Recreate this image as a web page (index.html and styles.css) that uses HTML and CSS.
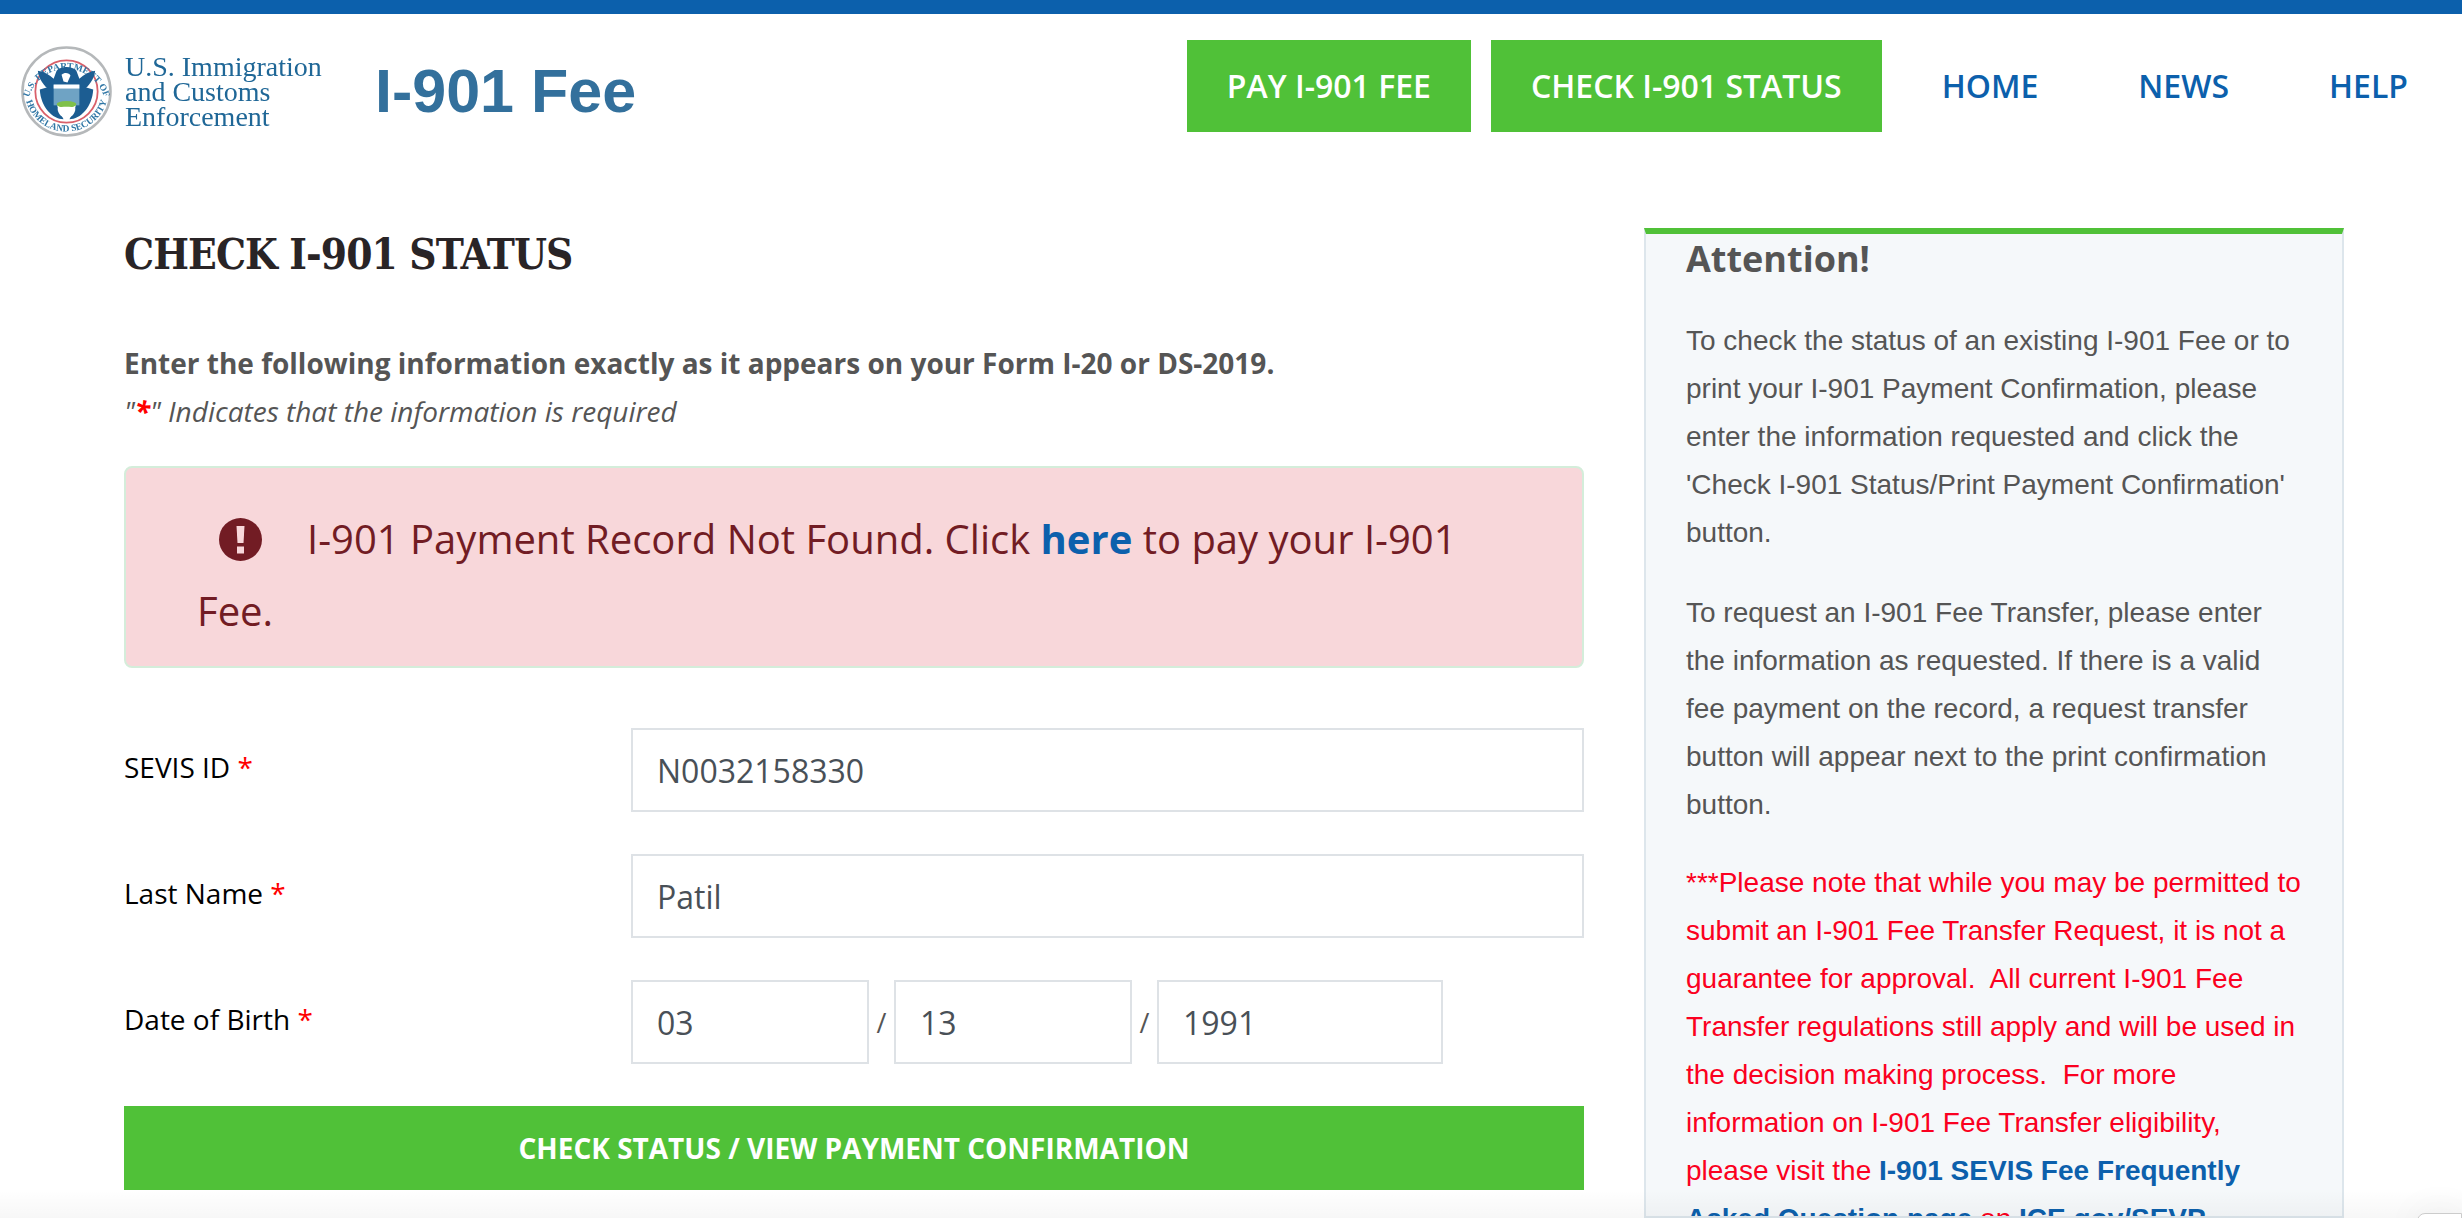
FILE: index.html
```html
<!DOCTYPE html>
<html>

<head>
  <meta charset="utf-8">
  <meta name="viewport" content="width=device-width">
  <title>I-901 Fee</title>

  <link rel="stylesheet" href="styles.css">
</head>

<body>
  <header class="topbar">
    <div class="brand">
      <svg class="seal" viewBox="0 0 92 92">
        <defs>
          <path id="sealTop" d="M7.5 54 A39.5 39.5 0 0 1 84.5 54"/>
          <path id="sealBottom" d="M3.5 44 A42.5 42.5 0 0 0 88.5 44"/>
        </defs>
        <circle cx="46" cy="46" r="44.5" fill="#fff" stroke="#b5b8ba" stroke-width="2.6"/>
        <circle cx="46" cy="46" r="31.5" fill="none" stroke="#d9606a" stroke-width="1.8"/>
        <text class="seal-text"><textPath href="#sealTop" startOffset="50%" text-anchor="middle">U.S. DEPARTMENT OF</textPath></text>
        <text class="seal-text"><textPath href="#sealBottom" startOffset="50%" text-anchor="middle">HOMELAND SECURITY</textPath></text>
        <path fill="#1c5d92" d="M17 25 C23 26 29 29 33 33 L36 25 C40 20 52 20 56 25 L59 33 C63 29 69 26 75 25 C74 33 69 41 62 45 L30 45 C23 41 18 33 17 25 Z"/>
        <path fill="#fff" d="M41 29 C44 26 49 27 50 30 L47 37 L43 36 Z"/>
        <path fill="#1c5d92" d="M19 44 L33 40 L37 62 L43 74 C32 74 20 62 19 44 Z"/>
        <path fill="#1c5d92" d="M73 44 L59 40 L55 62 L49 74 C60 74 72 62 73 44 Z"/>
        <rect x="33" y="39" width="26" height="21" fill="#6fa3c4"/>
        <rect x="33" y="39" width="26" height="4" fill="#fff"/>
        <ellipse cx="46" cy="59" rx="10" ry="3.5" fill="#7fc04a"/>
        <path fill="#fff" d="M37 63 C41 61 51 61 55 63 C55 69 50 73 46 73 C42 73 37 69 37 63 Z"/>
      </svg>
      <div class="agency">U.S. Immigration<br>and Customs<br>Enforcement</div>
      <div class="site-name">I-901 Fee</div>
    </div>
    <nav class="menu">
      <a class="menu-btn" href="#">PAY I-901 FEE</a>
      <a class="menu-btn" href="#">CHECK I-901 STATUS</a>
      <a class="menu-link" href="#">HOME</a>
      <a class="menu-link" href="#">NEWS</a>
      <a class="menu-link" href="#">HELP</a>
    </nav>
  </header>

  <main class="content">
    <section class="form-col">
      <h1>CHECK I-901 STATUS</h1>
      <p class="lead">Enter the following information exactly as it appears on your Form I-20 or DS-2019.</p>
      <p class="hint">"<b class="req">*</b>" Indicates that the information is required</p>

      <div class="alert">
        <svg class="alert-icon" viewBox="0 0 43 43">
          <circle cx="21.5" cy="21.5" r="21.5" fill="#721c24"/>
          <path d="M17.5 8 H25.5 L24.5 25 H18.5 Z" fill="#f8d7da"/>
          <rect x="18" y="28.5" width="7" height="7" fill="#f8d7da"/>
        </svg>I-901 Payment Record Not Found. Click <a href="#">here</a> to pay your I-901 Fee.
      </div>

      <form class="fields">
        <div class="field">
          <label>SEVIS ID <span class="req">*</span></label>
          <input class="box box-wide" value="N0032158330">
        </div>
        <div class="field">
          <label>Last Name <span class="req">*</span></label>
          <input class="box box-wide" value="Patil">
        </div>
        <div class="field">
          <label>Date of Birth <span class="req">*</span></label>
          <div class="dob">
            <input class="box box-part" value="03">
            <span class="slash">/</span>
            <input class="box box-part" value="13">
            <span class="slash">/</span>
            <input class="box box-year" value="1991">
          </div>
        </div>
        <button class="submit" type="button">CHECK STATUS / VIEW PAYMENT CONFIRMATION</button>
      </form>
    </section>

    <aside class="notice">
      <h2>Attention!</h2>
      <p>To check the status of an existing I-901 Fee or to print your I-901 Payment Confirmation, please enter the information requested and click the 'Check I-901 Status/Print Payment Confirmation' button.</p>
      <p>To request an I-901 Fee Transfer, please enter the information as requested. If there is a valid fee payment on the record, a request transfer button will appear next to the print confirmation button.</p>
      <p class="warn">***Please note that while you may be permitted to submit an I-901 Fee Transfer Request, it is not a guarantee for approval.&nbsp; All current I-901 Fee Transfer regulations still apply and will be used in the decision making process.&nbsp; For more information on I-901 Fee Transfer eligibility, please visit the <a href="#">I-901 SEVIS Fee Frequently Asked Question page</a> on <a href="#">ICE.gov/SEVP</a>.</p>
    </aside>
  </main>

  <div class="bottom-fade"></div>
  <div class="corner-badge"></div>
</body>

</html>
```

FILE: styles.css
```css
* {
  box-sizing: border-box;
}

html, body {
  height: 100%;
}

body {
  margin: 0;
  overflow: hidden;
  position: relative;
  background-color: white;
  border-top: 14px solid #0c60ac;
  font-family: "Open Sans", sans-serif;
  color: #555;
}

.topbar {
  display: flex;
  justify-content: space-between;
  align-items: flex-start;
  height: 214px;
  padding: 26px 14px 0 21px;
}

.brand {
  display: flex;
  align-items: center;
  height: 97px;
  padding-top: 5px;
}

.seal {
  width: 91px;
  height: 91px;
  filter: blur(0.6px);
}

.seal-text {
  font-family: "Liberation Serif", serif;
  font-size: 9.6px;
  font-weight: bold;
  fill: #2f76a5;
}

.agency {
  margin-left: 13px;
  width: 250px;
  font-family: "Liberation Serif", serif;
  font-size: 28px;
  line-height: 25px;
  color: #1f6797;
  filter: blur(0.4px);
}

.site-name {
  font-family: "Liberation Sans", sans-serif;
  font-weight: bold;
  font-size: 61px;
  color: #33709c;
  filter: blur(0.5px);
}

.menu {
  display: flex;
  align-items: center;
  gap: 20px;
  font-size: 32px;
  font-weight: 600;
}

.menu a {
  display: block;
  height: 92px;
  line-height: 92px;
  padding: 0 40px;
  text-decoration: none;
}

.menu-btn {
  color: white;
  background-color: #50c138;
}

.menu-link {
  color: #0c60ac;
}

.content {
  display: flex;
  justify-content: space-between;
  padding: 0 118px 0 124px;
}

.form-col {
  width: 1460px;
}

h1 {
  margin: 0;
  height: 114px;
  padding-top: 2px;
  font-family: "DejaVu Serif Condensed", "DejaVu Serif", serif;
  font-size: 42px;
  line-height: 50px;
  letter-spacing: -0.9px;
  font-weight: bold;
  color: #292426;
}

.lead {
  margin: 0;
  font-size: 28px;
  line-height: 42px;
  font-weight: bold;
}

.hint {
  margin: 6px 0 0;
  font-size: 28px;
  line-height: 42px;
  font-style: italic;
}

.req {
  color: #f00;
}

.alert {
  margin-top: 34px;
  height: 202px;
  padding: 35px 60px 0 71px;
  border: 2px solid #d4edda;
  border-radius: 8px;
  background-color: #f8d7da;
  color: #721c24;
  font-size: 40px;
  line-height: 72px;
}

.alert a {
  color: #0c60ac;
  font-weight: bold;
  text-decoration: none;
}

.alert-icon {
  width: 43px;
  height: 43px;
  margin: 0 45px 0 22px;
  vertical-align: -7px;
}

.fields {
  display: flex;
  flex-direction: column;
  gap: 42px;
  margin-top: 60px;
}

.field {
  display: flex;
  height: 84px;
}

label {
  width: 507px;
  font-size: 28px;
  line-height: 78px;
  color: black;
}

.box {
  height: 84px;
  padding: 0 24px;
  border: 2px solid #dee2e6;
  background-color: white;
  color: #495057;
  font-family: "Open Sans", sans-serif;
  font-size: 32px;
}

.box-wide {
  width: 953px;
}

.dob {
  display: flex;
  align-items: center;
}

.box-part {
  width: 238px;
}

.box-year {
  width: 286px;
}

.slash {
  width: 25px;
  text-align: center;
  font-size: 27px;
}

.submit {
  height: 84px;
  width: 100%;
  border: 0;
  background-color: #50c138;
  color: white;
  font-family: "Open Sans", sans-serif;
  font-size: 28px;
  font-weight: bold;
}

.notice {
  width: 700px;
  height: 990px;
  overflow: hidden;
  padding: 0 38px 0 40px;
  border: 2px solid #dde6ec;
  border-top: 6px solid #50c138;
  background-color: #f5f8fa;
  font-family: "Liberation Sans", sans-serif;
  font-size: 28px;
  line-height: 48px;
}

.notice h2 {
  margin: 0 0 33px;
  font-family: "Open Sans", sans-serif;
  font-size: 36px;
  line-height: 50px;
  font-weight: bold;
}

.notice p {
  margin: 0 0 32px;
}

.notice .warn {
  margin-top: -2px;
  color: #fb0020;
}

.warn a {
  color: #0c60ac;
  font-weight: bold;
  text-decoration: none;
}

.bottom-fade {
  position: absolute;
  left: 0;
  right: 0;
  bottom: 0;
  height: 28px;
  background: linear-gradient(rgba(0,0,0,0), rgba(0,0,0,0.03));
}

.corner-badge {
  position: absolute;
  right: 0;
  bottom: -25px;
  width: 45px;
  height: 30px;
  border: 1px solid #ccc;
  border-radius: 8px 0 0 8px;
  background-color: white;
  box-shadow: 0 0 40px rgba(0,0,0,0.06);
}
```
